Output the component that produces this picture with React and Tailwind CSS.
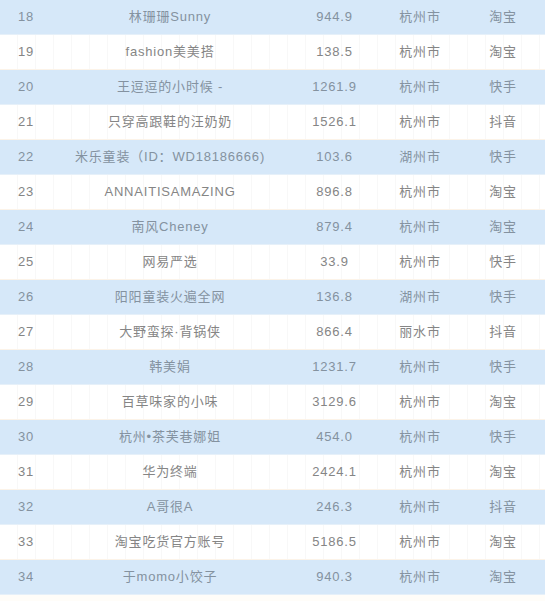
import React from "react";

const rows = [
  ["18", "林珊珊Sunny", "944.9", "杭州市", "淘宝"],
  ["19", "fashion美美搭", "138.5", "杭州市", "淘宝"],
  ["20", "王逗逗的小时候 -", "1261.9", "杭州市", "快手"],
  ["21", "只穿高跟鞋的汪奶奶", "1526.1", "杭州市", "抖音"],
  ["22", "米乐童装（ID：WD18186666)", "103.6", "湖州市", "快手"],
  ["23", "ANNAITISAMAZING", "896.8", "杭州市", "淘宝"],
  ["24", "南风Cheney", "879.4", "杭州市", "淘宝"],
  ["25", "网易严选", "33.9", "杭州市", "快手"],
  ["26", "阳阳童装火遍全网", "136.8", "湖州市", "快手"],
  ["27", "大野蛮探·背锅侠", "866.4", "丽水市", "抖音"],
  ["28", "韩美娟", "1231.7", "杭州市", "快手"],
  ["29", "百草味家的小味", "3129.6", "杭州市", "淘宝"],
  ["30", "杭州•茶芙巷娜姐", "454.0", "杭州市", "快手"],
  ["31", "华为终端", "2424.1", "杭州市", "淘宝"],
  ["32", "A哥很A", "246.3", "杭州市", "抖音"],
  ["33", "淘宝吃货官方账号", "5186.5", "杭州市", "淘宝"],
  ["34", "于momo小饺子", "940.3", "杭州市", "淘宝"],
];

export default function App() {
  return (
    <div
      className="w-[545px] h-[601px] bg-white text-[13px] tracking-[0.8px]"
      style={{ fontFamily: '"Liberation Sans", "Noto Sans CJK SC", sans-serif' }}
    >
      {rows.map((r, i) => {
        const blue = i % 2 === 0;
        return (
          <div
            key={r[0]}
            className={
              blue
                ? "grid grid-cols-[50px_240px_89px_82px_84px] h-[35px] items-center bg-[#d6e8f9] text-[#8492a0] border-b border-[#e6f0f9]"
                : "grid grid-cols-[50px_240px_89px_82px_84px] h-[35px] items-center bg-[repeating-linear-gradient(90deg,#ffffff_0px,#ffffff_17px,#f8f8f8_17px,#f8f8f8_18px)] text-[#858585] border-b border-[#fcf3e8]"
            }
          >
            <div className="pl-[18px]">{r[0]}</div>
            <div className="text-center whitespace-nowrap">{r[1]}</div>
            <div className="text-center">{r[2]}</div>
            <div className="text-center">{r[3]}</div>
            <div className="text-center">{r[4]}</div>
          </div>
        );
      })}
      <div className="h-[6px] bg-[#fffdf9]" />
    </div>
  );
}
